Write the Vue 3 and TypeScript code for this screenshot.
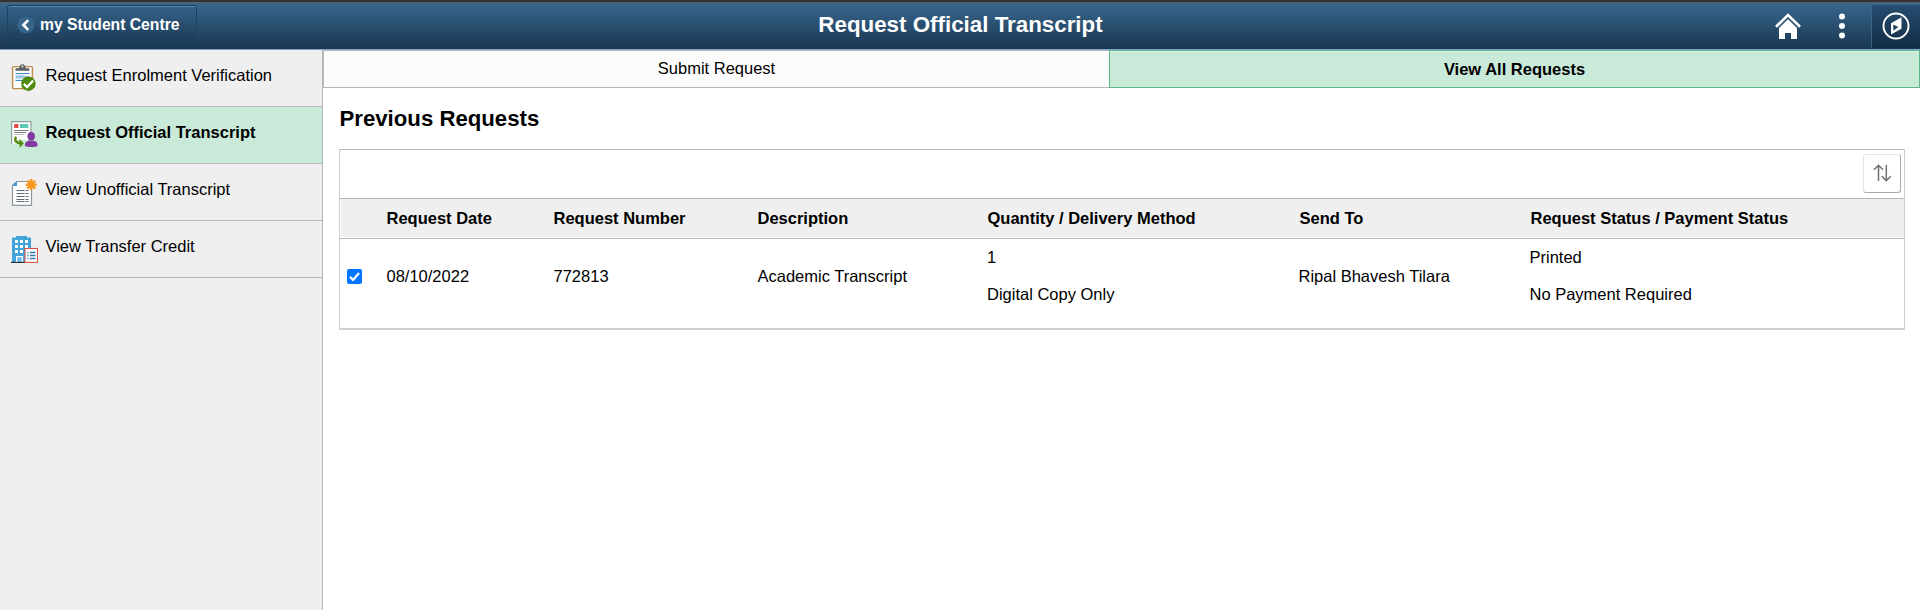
<script setup lang="ts">
import { ref } from 'vue'

interface NavItem {
  label: string
  icon: 'clipboard' | 'transcript' | 'document' | 'building'
  active?: boolean
}

interface TranscriptRequest {
  date: string
  number: string
  description: string
  quantity: number
  delivery: string
  sendTo: string
  status: string
  payment: string
}

const navItems: NavItem[] = [
  { label: 'Request Enrolment Verification', icon: 'clipboard' },
  { label: 'Request Official Transcript', icon: 'transcript', active: true },
  { label: 'View Unofficial Transcript', icon: 'document' },
  { label: 'View Transfer Credit', icon: 'building' },
]

const columns = [
  'Request Date',
  'Request Number',
  'Description',
  'Quantity / Delivery Method',
  'Send To',
  'Request Status / Payment Status',
]

const requests: TranscriptRequest[] = [
  {
    date: '08/10/2022',
    number: '772813',
    description: 'Academic Transcript',
    quantity: 1,
    delivery: 'Digital Copy Only',
    sendTo: 'Ripal Bhavesh Tilara',
    status: 'Printed',
    payment: 'No Payment Required',
  },
]

const checked = ref(true)
</script>

<template>
  <div class="page">
    <header class="banner">
      <div class="banner-left">
        <button class="back">
          <svg width="18" height="18" viewBox="0 0 18 18">
            <circle cx="9" cy="9" r="8.5" fill="#36658b" />
            <path d="M11.2 4.2 6.4 9l4.8 4.8" fill="none" stroke="#fff" stroke-width="2.6" />
          </svg>
          <span>my Student Centre</span>
        </button>
      </div>
      <h1>Request Official Transcript</h1>
      <div class="banner-right">
        <button class="tool home" aria-label="Home">
          <svg width="28" height="28" viewBox="0 0 28 28">
            <path d="M2 14.8 14 3l12 11.8" fill="none" stroke="#fff" stroke-width="2.6" stroke-linejoin="miter" />
            <path d="M14 7.300 23 16v11h-6v-6h-6v6H5V16z" fill="#fff" />
          </svg>
        </button>
        <button class="tool dots" aria-label="Actions">
          <svg width="8" height="28" viewBox="0 0 8 28" fill="#fff">
            <circle cx="4" cy="4.6" r="3" />
            <circle cx="4" cy="14" r="3" />
            <circle cx="4" cy="23.4" r="3" />
          </svg>
        </button>
        <button class="tool nav" aria-label="Navigator">
          <svg width="28" height="28" viewBox="0 0 28 28">
            <circle cx="14" cy="14" r="12.5" fill="none" stroke="#fff" stroke-width="1.9" />
            <path d="M19.500 5.200v11.500L9 22.600V11.200z" fill="#fff" />
            <path d="M11.300 12.600l5 2.400-5 3.800z" fill="#1d3f5d" />
          </svg>
        </button>
      </div>
    </header>

    <div class="body">
      <nav class="sidebar">
        <a v-for="item in navItems" :key="item.label" class="item" :class="{ active: item.active }">
          <svg v-if="item.icon === 'clipboard'" width="28" height="28" viewBox="0 0 28 28">
            <rect x="2.6" y="3.6" width="19.8" height="22" rx="1" fill="#fff" stroke="#bd8c4b" stroke-width="1.4" />
            <path d="M5.500 7.700V5.200h3.600c0-2 1.200-3.900 3.300-3.900s3.300 1.900 3.300 3.900h3.600v2.500z" fill="#5c6064" />
            <circle cx="12.4" cy="3.500" r="1" fill="#eee" />
            <path d="M5.500 10.500h14M5.500 14h14M5.500 17.500h8" stroke="#3c8cc4" stroke-width="1.200" />
            <path d="M5.500 12.300h9M5.500 15.800h7" stroke="#a5cdea" stroke-width="1" />
            <circle cx="18.400" cy="20.700" r="7.200" fill="#508a0c" />
            <path d="M13.800 20.800l3.300 3.200 6-6.400" fill="none" stroke="#fff" stroke-width="2.300" />
          </svg>
          <svg v-else-if="item.icon === 'transcript'" width="28" height="28" viewBox="0 0 28 28">
            <path d="M1.700 23.800V1.700h19.200V20H7v4z" fill="#fff" />
            <path d="M1.700 23.800V1.700h19.200V14" fill="none" stroke="#8f9ea0" stroke-width="1.200" />
            <rect x="4.200" y="4" width="4.200" height="4" fill="#e5483d" />
            <rect x="10" y="4" width="8.300" height="4" fill="#5cc6b3" />
            <path d="M4 10.500h14.500M4 12.500h12" stroke="#7c7c7c" stroke-width="1" />
            <path d="M4 14.500h10.500" stroke="#bbb" stroke-width="1" />
            <path d="M6 16.800c-2.200 4.200.8 6.400 5.200 6.600" fill="none" stroke="#508a0c" stroke-width="2.400" />
            <path d="M9.200 18.800l4.600 4.500-4 4.400z" fill="#508a0c" />
            <ellipse cx="21.200" cy="16.300" rx="3.700" ry="4.300" fill="#813a9f" />
            <path d="M15 26c-.7-4 2.200-5 4.500-5.600h3.400c2.300.6 5.300 1.600 4.600 5.600-2 1.400-10.300 1.400-12.500 0z" fill="#813a9f" />
          </svg>
          <svg v-else-if="item.icon === 'document'" class="low" width="28" height="28" viewBox="0 0 28 28">
            <path d="M2.500 7.500 6.800 3.500H21.500v23.900h-19z" fill="#fff" stroke="#8a979c" stroke-width="1.200" />
            <path d="M2 8 7 3v5z" fill="#4a9ad8" />
            <path d="M6.500 12.500h8M6.500 15.500h8M6.500 18.500h8M6.500 21.500h8M6.500 23.500h8M15.500 12.500h3M15.500 15.500h3M15.500 18.500h3M15.500 21.500h3M15.500 23.500h3" stroke="#5b6b78" stroke-width="1.100" />
            <path d="M21.200 1v11.200M15.600 6.600h11.200M17.200 2.600l8 8M25.200 2.600l-8 8" stroke="#f7981d" stroke-width="2.400" />
          </svg>
          <svg v-else class="low" width="28" height="28" viewBox="0 0 28 28">
            <path d="M6 1h11v1.400h4v25H2V2.400h4z" fill="#43a4dc" />
            <g fill="#fff">
              <path d="M5 5h3v3H5zM10 5h3v3h-3zM15 5h3v3h-3zM5 10h3v3H5zM10 10h3v3h-3zM15 10h3v3h-3zM5 15h3v3H5zM10 15h3v3h-3z" />
              <rect x="6" y="21" width="7" height="6.500" />
            </g>
            <path d="M7.300 27v-4.800h4.400V27z" fill="#6ab8e5" />
            <path d="M1 27.400h14" stroke="#24292c" stroke-width="1.100" />
            <rect x="15" y="13.500" width="12.500" height="13.900" fill="#fff" stroke="#dc5148" stroke-width="1.100" />
            <path d="M20 17.500h5.500M20 20.500h5.500M20 23.500h5.500" stroke="#3278a8" stroke-width="1.500" />
            <path d="M17 17.500h1.700M17 20.500h1.700M17 23.500h1.700" stroke="#6fa9d0" stroke-width="1.500" />
          </svg>
          <span>{{ item.label }}</span>
        </a>
      </nav>

      <main class="content">
        <div class="tabs">
          <a class="tab">Submit Request</a>
          <a class="tab selected">View All Requests</a>
        </div>
        <section class="section">
          <h2>Previous Requests</h2>
          <div class="grid">
            <div class="toolbar">
              <button class="sort" aria-label="Sort">
                <svg width="20" height="20" viewBox="0 0 20 20" fill="none" stroke="#707070" stroke-width="1.500">
                  <path d="M6.500 18V2.300M2 6.700l4.500-4.400L11 6.700" />
                  <path d="M14.300 2v15.700M9.800 13.300l4.500 4.400 4.500-4.400" />
                </svg>
              </button>
            </div>
            <div class="row head">
              <span></span>
              <span v-for="c in columns" :key="c">{{ c }}</span>
            </div>
            <div v-for="r in requests" :key="r.number" class="row data">
              <label class="check" @click="checked = !checked">
                <svg width="15" height="15" viewBox="0 0 15 15">
                  <rect width="15" height="15" rx="2" :fill="checked ? '#0075ff' : '#fff'" />
                  <path v-if="checked" d="M3 7.900l3.100 3.100 6-7" fill="none" stroke="#fff" stroke-width="2.200" />
                </svg>
              </label>
              <span>{{ r.date }}</span>
              <span>{{ r.number }}</span>
              <span>{{ r.description }}</span>
              <div class="stack"><span>{{ r.quantity }}</span><span>{{ r.delivery }}</span></div>
              <span>{{ r.sendTo }}</span>
              <div class="stack"><span>{{ r.status }}</span><span>{{ r.payment }}</span></div>
            </div>
          </div>
        </section>
      </main>
    </div>
  </div>
</template>

<style>
body {
  margin: 0;
}
</style>

<style scoped>
.page {
  display: flex;
  flex-direction: column;
  box-sizing: border-box;
  height: 610px;
  border-top: 2px solid #333;
  background: #fff;
  color: #000;
  font: 16.5px/20px "Liberation Sans", Arial, sans-serif;
  overflow: hidden;
}
button {
  margin: 0;
  padding: 0;
  border: 0;
  background: none;
  font: inherit;
  color: inherit;
}
svg {
  display: block;
  flex: none;
}
.banner {
  display: grid;
  grid-template-columns: 1fr auto 1fr;
  box-sizing: border-box;
  height: 48px;
  border-top: 1px solid #5e5e60;
  border-bottom: 1px solid #80a6cc;
  background: linear-gradient(#38678e, #1a3651);
  color: #fff;
}
.banner-left {
  padding: 2px 0 0 7px;
}
.back {
  display: flex;
  align-items: center;
  gap: 5px;
  box-sizing: border-box;
  width: 190px;
  height: 39px;
  padding-left: 9px;
  border: 1px solid #1c4263;
  border-top-color: #17385a;
  border-radius: 3px;
  background: linear-gradient(#35638a, #1c3a56);
  box-shadow: inset 0 1px 0 #5a8bb5;
  font-size: 15.7px;
  font-weight: bold;
}
h1 {
  margin: 0;
  padding-left: 1px;
  font-size: 22.35px;
  line-height: 43px;
}
.banner-right {
  display: flex;
  justify-content: flex-end;
}
.tool {
  display: flex;
  align-items: center;
  justify-content: center;
  height: 46px;
}
.home {
  width: 54px;
}
.dots {
  width: 54px;
}
.nav {
  box-sizing: border-box;
  width: 49px;
  height: 43px;
  margin: 2px 0 0 2px;
  border-left: 1px solid #3c6284;
  background: linear-gradient(#264d70, #122c45);
  padding-bottom: 2px;
}
.body {
  display: flex;
  flex: 1;
}
.sidebar {
  box-sizing: border-box;
  width: 323px;
  border-right: 1px solid #b5b5b5;
  background: #efefef;
}
.item {
  display: flex;
  gap: 7px;
  box-sizing: border-box;
  height: 57px;
  padding: 13px 0 0 10px;
  border-bottom: 1px solid #b8b8b8;
}
.item span {
  padding-top: 2px;
  margin-left: 0.5px;
}
.low {
  margin-top: 1px;
}
.active {
  background: #c9ead8;
  font-weight: bold;
}
.content {
  flex: 1;
}
.tabs {
  display: flex;
  height: 38px;
}
.tab {
  box-sizing: border-box;
  width: 786px;
  border: 1px solid #b8b8b8;
  border-right: 0;
  background: #fcfcfc;
  line-height: 34px;
  text-align: center;
}
.selected {
  flex: 1;
  border: 1px solid #5fb588;
  background: #c9ead8;
  box-shadow: inset 0 1px 0 #d8f3e4;
  font-weight: bold;
  line-height: 36px;
}
.section {
  padding: 18px 15px 0 16px;
}
h2 {
  margin: 0 0 18px;
  padding-left: 0.5px;
  font-size: 22.2px;
  line-height: 25px;
}
.grid {
  border: 1px solid #b8b8b8;
  border-color: #b8b8b8 #ccc #d0d0d0;
  border-bottom-width: 2px;
}
.toolbar {
  display: flex;
  justify-content: flex-end;
  box-sizing: border-box;
  height: 49px;
  padding: 4px 3px 0 0;
  border-bottom: 1px solid #b8b8b8;
}
.sort {
  display: flex;
  align-items: center;
  justify-content: center;
  box-sizing: border-box;
  width: 38px;
  height: 39px;
  padding-bottom: 2px;
  border: 1px solid #e4e4e4;
  border-right-color: #aaa;
  border-bottom-color: #aaa;
  border-radius: 3px;
}
.row {
  display: grid;
  grid-template-columns: 46px 167px 204px 230px 312px 231px 1fr;
  align-items: center;
  box-sizing: border-box;
}
.head {
  height: 40px;
  padding: 0 0 1px 0.5px;
  border-bottom: 1px solid #b8b8b8;
  background: #efefef;
  box-shadow: inset 1px 0 #fff, inset 0 -1px #fff;
  font-weight: bold;
}
.data {
  grid-template-columns: 46.5px 167px 204px 229.5px 311.5px 231px 1fr;
  height: 89px;
  padding-bottom: 16px;
}
.check {
  padding: 1px 0 0 7px;
}
.stack {
  display: flex;
  flex-direction: column;
  gap: 17px;
}
</style>
